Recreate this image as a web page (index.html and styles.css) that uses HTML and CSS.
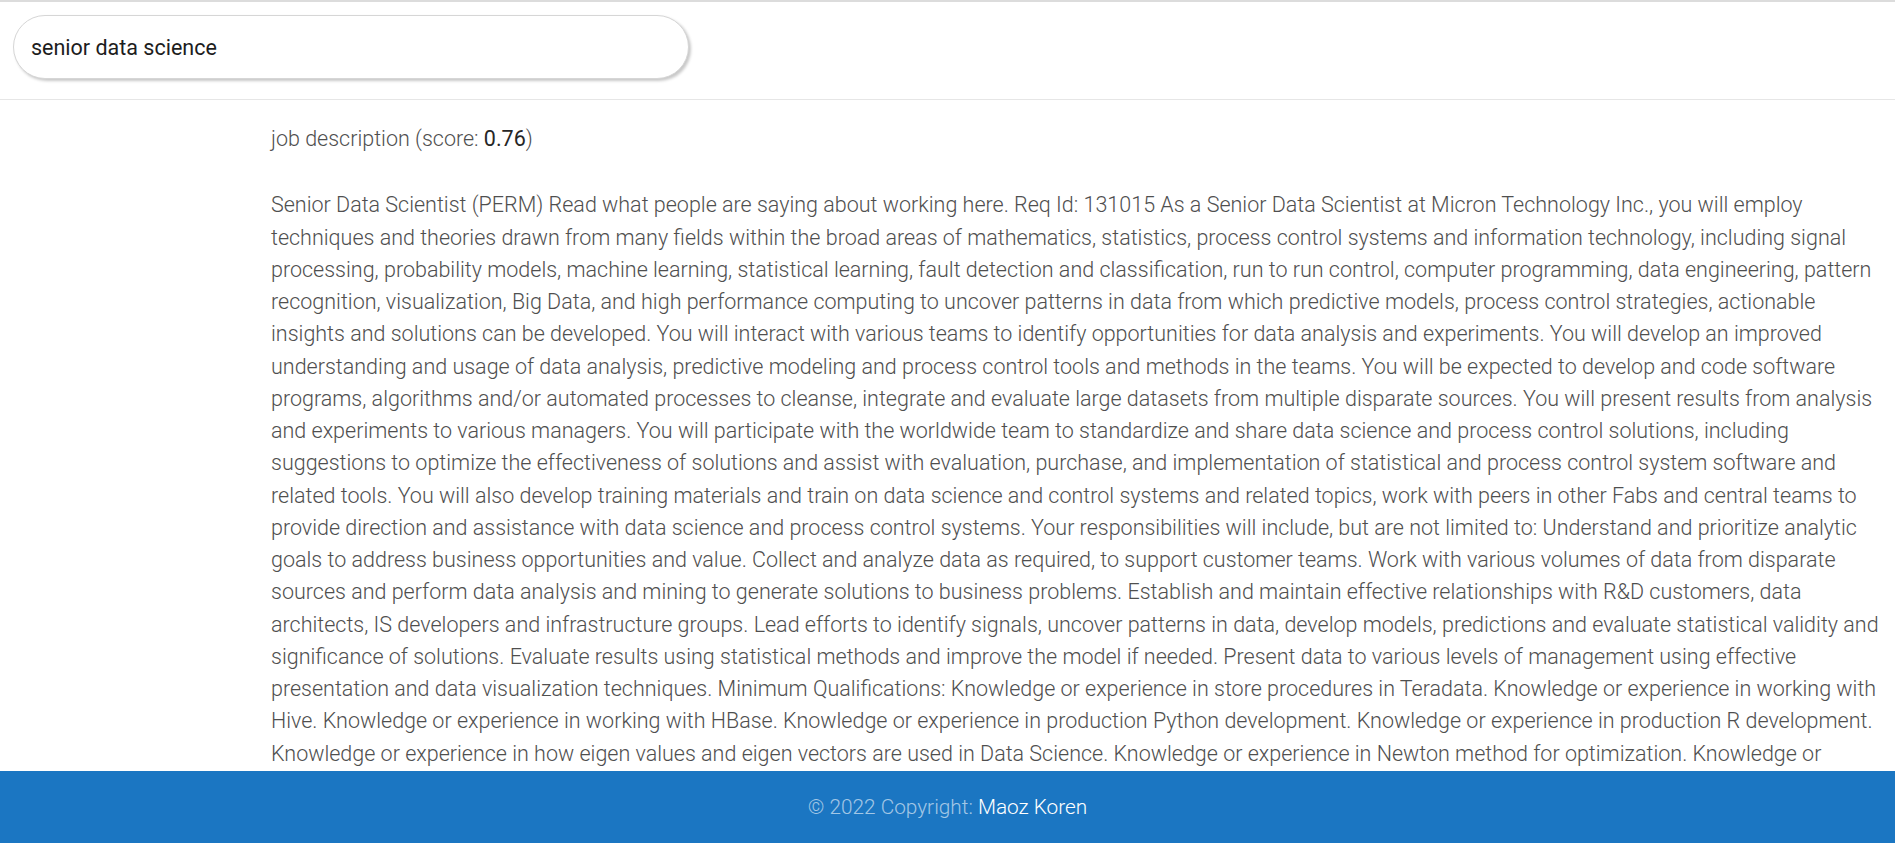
FILE: index.html
```html
<!DOCTYPE html>
<html lang="en">
<head>
<meta charset="utf-8">
<title>Job search</title>
<link rel="stylesheet" href="styles.css">
</head>
<body>
<header class="topbar">
  <div class="search">
    <input class="search-input" type="text" value="senior data science">
  </div>
</header>
<main class="results">
  <section class="result">
    <h2 class="result-title">job description (score: <span class="score">0.76</span>)</h2>
    <p class="result-text">Senior Data Scientist (PERM) Read what people are saying about working here. Req Id: 131015 As a Senior Data Scientist at Micron Technology Inc., you will employ techniques and theories drawn from many fields within the broad areas of mathematics, statistics, process control systems and information technology, including signal processing, probability models, machine learning, statistical learning, fault detection and classification, run to run control, computer programming, data engineering, pattern recognition, visualization, Big Data, and high performance computing to uncover patterns in data from which predictive models, process control strategies, actionable insights and solutions can be developed. You will interact with various teams to identify opportunities for data analysis and experiments. You will develop an improved understanding and usage of data analysis, predictive modeling and process control tools and methods in the teams. You will be expected to develop and code software programs, algorithms and/or automated processes to cleanse, integrate and evaluate large datasets from multiple disparate sources. You will present results from analysis and experiments to various managers. You will participate with the worldwide team to standardize and share data science and process control solutions, including suggestions to optimize the effectiveness of solutions and assist with evaluation, purchase, and implementation of statistical and process control system software and related tools. You will also develop training materials and train on data science and control systems and related topics, work with peers in other Fabs and central teams to provide direction and assistance with data science and process control systems. Your responsibilities will include, but are not limited to: Understand and prioritize analytic goals to address business opportunities and value. Collect and analyze data as required, to support customer teams. Work with various volumes of data from disparate sources and perform data analysis and mining to generate solutions to business problems. Establish and maintain effective relationships with R&amp;D customers, data architects, IS developers and infrastructure groups. Lead efforts to identify signals, uncover patterns in data, develop models, predictions and evaluate statistical validity and significance of solutions. Evaluate results using statistical methods and improve the model if needed. Present data to various levels of management using effective presentation and data visualization techniques. Minimum Qualifications: Knowledge or experience in store procedures in Teradata. Knowledge or experience in working with Hive. Knowledge or experience in working with HBase. Knowledge or experience in production Python development. Knowledge or experience in production R development. Knowledge or experience in how eigen values and eigen vectors are used in Data Science. Knowledge or experience in Newton method for optimization. Knowledge or experience in gradient descent methods for optimization.</p>
  </section>
</main>
<footer class="footer">
  <span class="copy">© 2022 Copyright: <a class="author" href="#">Maoz Koren</a></span>
</footer>
</body>
</html>
```

FILE: styles.css
```css
html, body {
  margin: 0;
  padding: 0;
}

body {
  font-family: Roboto, "Liberation Sans", sans-serif;
  color: #4f4f4f;
  background: #fff;
  border-top: 2px solid #dcdcdc;
}

.topbar {
  box-sizing: border-box;
  height: 98px;
  border-bottom: 1px solid #e6e6e6;
  padding: 13px 0 0 13px;
}

.search-input {
  box-sizing: border-box;
  width: 676px;
  height: 64px;
  border: 1px solid #d6d6d6;
  border-radius: 32px;
  box-shadow: 2px 2px 3px rgba(0, 0, 0, 0.22);
  padding: 0 0 0 17px;
  font-family: Roboto, "Liberation Sans", sans-serif;
  font-size: 21.5px;
  color: #1d1d1d;
  background: #fff;
  outline: none;
}

.results {
  padding: 23px 8px 120px 271px;
}

.result-title {
  margin: 0;
  font-size: 21.5px;
  line-height: 32.25px;
  font-weight: 300;
  color: #4f4f4f;
}

.score {
  font-weight: 400;
  color: #262626;
}

.result-text {
  margin: 34px 0 0;
  font-size: 21.5px;
  line-height: 32.25px;
  font-weight: 300;
  color: #4f4f4f;
}

.footer {
  position: fixed;
  left: 0;
  right: 0;
  bottom: 0;
  height: 72px;
  background: #1b76c2;
  display: flex;
  align-items: center;
  justify-content: center;
  font-size: 20.8px;
  font-weight: 300;
}

.copy {
  color: rgba(255, 255, 255, 0.6);
}

.author {
  color: #fff;
  text-decoration: none;
}
```
